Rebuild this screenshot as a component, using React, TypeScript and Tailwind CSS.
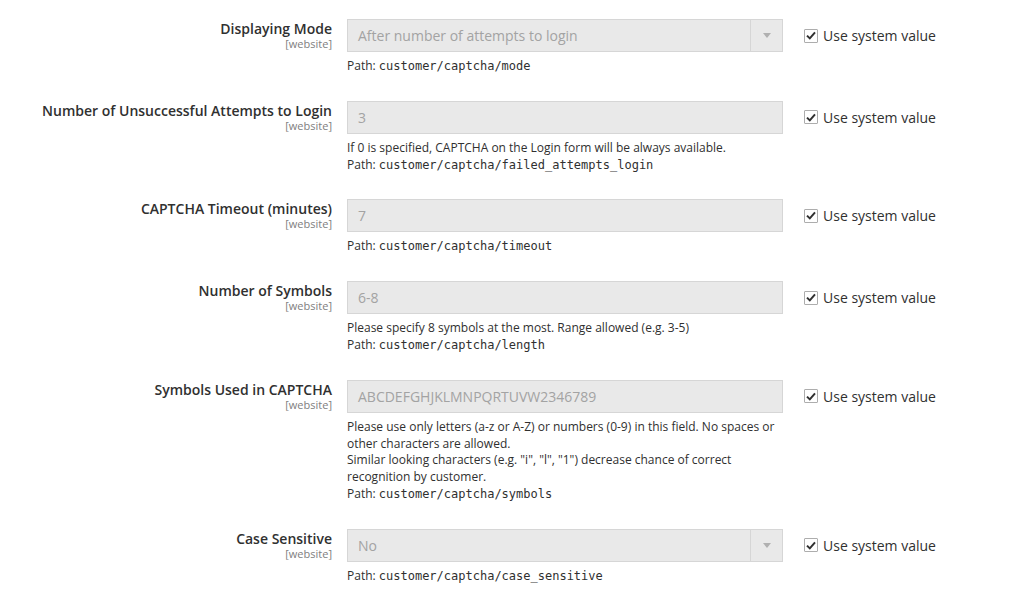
import React from "react";

type Row = {
  label: string;
  value: string;
  select?: boolean;
  notes?: string[];
  path: string;
};

const rows: Row[] = [
  { label: "Displaying Mode", value: "After number of attempts to login", select: true, path: "customer/captcha/mode" },
  {
    label: "Number of Unsuccessful Attempts to Login",
    value: "3",
    notes: ["If 0 is specified, CAPTCHA on the Login form will be always available."],
    path: "customer/captcha/failed_attempts_login",
  },
  { label: "CAPTCHA Timeout (minutes)", value: "7", path: "customer/captcha/timeout" },
  {
    label: "Number of Symbols",
    value: "6-8",
    notes: ["Please specify 8 symbols at the most. Range allowed (e.g. 3-5)"],
    path: "customer/captcha/length",
  },
  {
    label: "Symbols Used in CAPTCHA",
    value: "ABCDEFGHJKLMNPQRTUVW2346789",
    notes: [
      "Please use only letters (a-z or A-Z) or numbers (0-9) in this field. No spaces or other characters are allowed.",
      'Similar looking characters (e.g. "i", "l", "1") decrease chance of correct recognition by customer.',
    ],
    path: "customer/captcha/symbols",
  },
  { label: "Case Sensitive", value: "No", select: true, path: "customer/captcha/case_sensitive" },
];

function CheckIcon() {
  return (
    <svg width="10" height="9" viewBox="0 0 10 9" fill="none">
      <path d="M1 4.6 L3.8 7.4 L9 1.4" stroke="#303030" strokeWidth="2" />
    </svg>
  );
}

function Field({ row }: { row: Row }) {
  return (
    <div className="flex items-start">
      <div className="w-[332px] shrink-0 text-right pt-[1px]">
        <div className="text-[14px] font-semibold leading-[18px] text-[#303030]">{row.label}</div>
        <div className="text-[11px] leading-[12px] text-[#808080]">[website]</div>
      </div>
      <div className="ml-[15px] w-[436px] shrink-0">
        <div className="flex h-[33px] items-stretch border border-[#d6d6d6] bg-[#e9e9e9]">
          <div className="flex flex-1 items-center pl-[10px] text-[14px] text-[#a3a3a3]">{row.value}</div>
          {row.select && (
            <div className="flex w-[32px] items-center justify-center border-l border-[#d6d6d6]">
              <svg width="8" height="5" viewBox="0 0 8 5">
                <path d="M0 0 H8 L4 5 Z" fill="#b0b0b0" />
              </svg>
            </div>
          )}
        </div>
        <div className="mt-[6px] text-[12px] leading-[16.8px] text-[#303030]">
          {row.notes?.map((n, i) => (
            <div key={i}>{n}</div>
          ))}
          <div>
            Path: <span className="font-['DejaVu_Sans_Mono',monospace] text-[12px]">{row.path}</span>
          </div>
        </div>
      </div>
      <div className="ml-[21px] flex h-[33px] items-center">
        <span className="flex h-[14px] w-[14px] items-center justify-center rounded-[1px] border border-[#adadad] bg-white">
          <CheckIcon />
        </span>
        <span className="ml-[5px] text-[14px] text-[#303030]">Use system value</span>
      </div>
    </div>
  );
}

export default function App() {
  return (
    <div className="min-h-[608px] w-[1015px] bg-white pt-[19px] font-['Open_Sans',sans-serif]">
      <div className="flex flex-col gap-[26px]">
        {rows.map((r) => (
          <Field key={r.label} row={r} />
        ))}
      </div>
    </div>
  );
}
